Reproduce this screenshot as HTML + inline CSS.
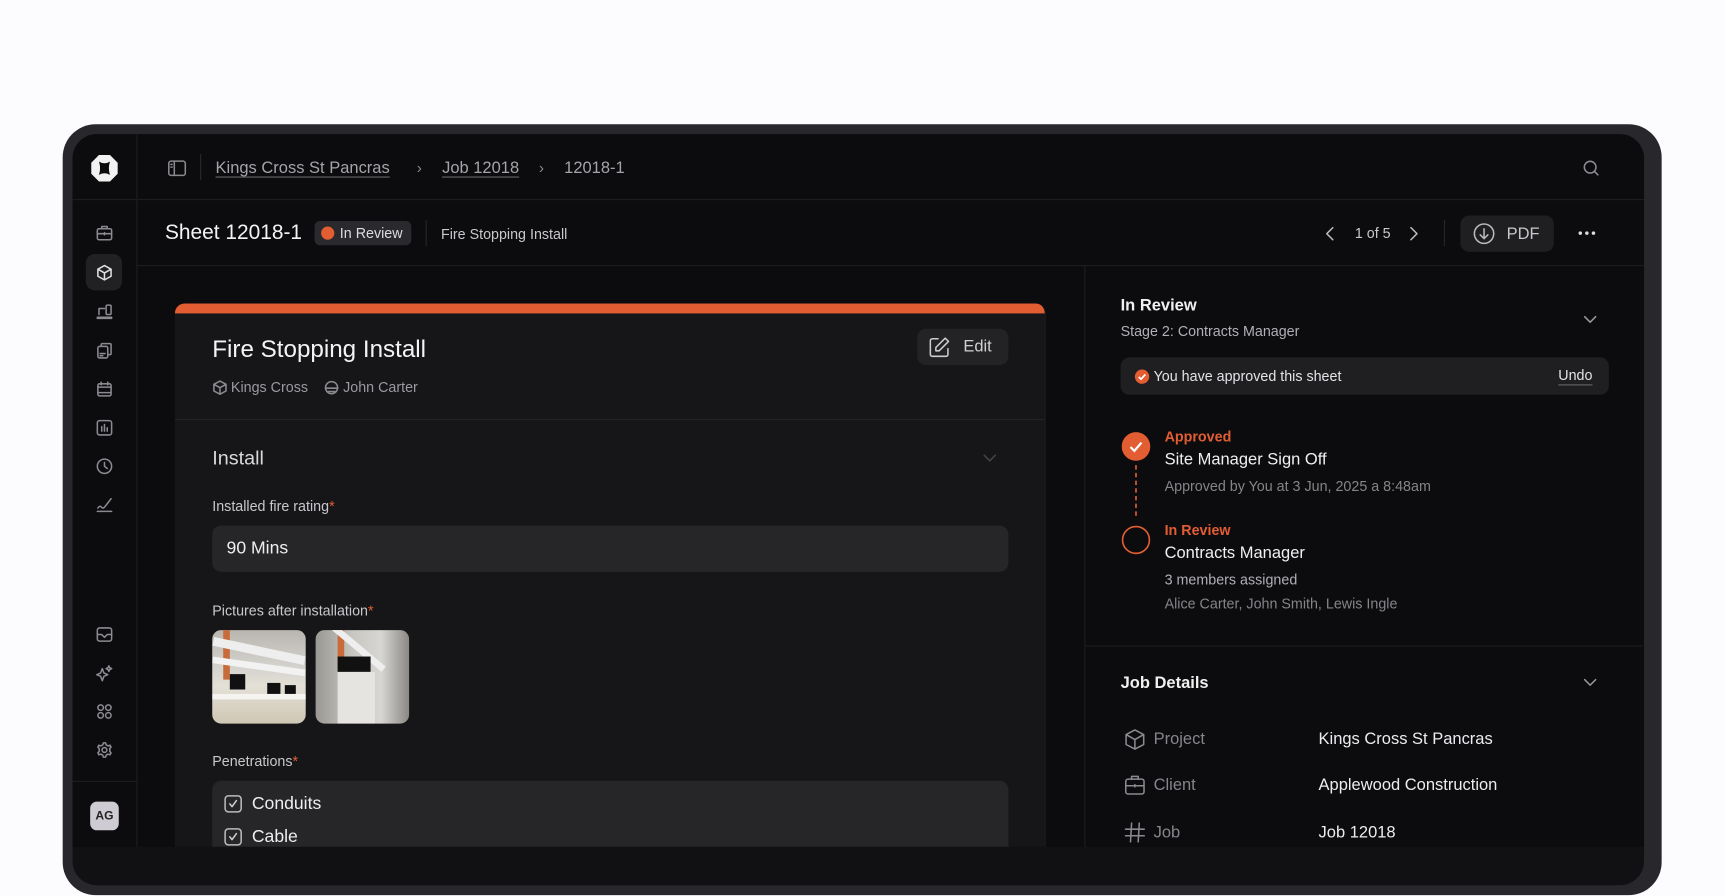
<!DOCTYPE html>
<html><head><meta charset="utf-8"><style>
*{margin:0;padding:0;box-sizing:border-box}
html,body{width:1725px;height:896px;overflow:hidden;background:#fcfcfe;font-family:"Liberation Sans",sans-serif}
#s{position:absolute;left:0;top:0;width:1560px;height:811px;transform:scale(1.0997);transform-origin:0 0}
.a{position:absolute}
.t{position:absolute;white-space:nowrap;transform:translateY(1.5px)}
svg{position:absolute;overflow:visible}
.ic{fill:none;stroke:#8a8a90;stroke-width:1.4;stroke-linecap:round;stroke-linejoin:round}
</style></head><body><div id="s">
<div class="a" style="left:57px;top:113px;width:1454px;height:701px;border-radius:30px;background:#27272c"></div>
<div class="a" style="left:66px;top:122px;width:1429px;height:683px;border-radius:22px;background:#111113;overflow:hidden">
 <div class="a" style="left:0;top:0;width:1429px;height:648px;background:#0c0c0e"></div>
</div>
<div class="a" style="left:124px;top:122px;width:1px;height:648px;background:#1e1e21"></div>
<div class="a" style="left:66px;top:181px;width:1429px;height:1px;background:#1e1e21"></div>
<div class="a" style="left:124px;top:241px;width:1371px;height:1px;background:#1e1e21"></div>
<div class="a" style="left:66px;top:710px;width:58px;height:1px;background:#1e1e21"></div>
<div class="a" style="left:986px;top:241px;width:1px;height:529px;background:#1e1e21"></div>
<svg style="left:83px;top:141px" width="24" height="24" viewBox="0 0 24 24"><path d="M7 0H17L24 7V17L17 24H7L0 17V7Z" fill="#f2f2f2"/><path d="M7 6Q12 9 17 6Q15 12 17 18Q12 15 7 18Q9 12 7 6Z" fill="#0c0c0e"/></svg>
<div class="a" style="left:78px;top:231px;width:33px;height:33px;border-radius:8px;background:#212124"></div>
<svg style="left:88px;top:205px" width="14" height="14" class="ic"><rect x="0.5" y="3" width="13" height="10" rx="1.5"/><path d="M4.5 3V1H9.5V3M0.5 7.5H13.5M7 6.5V8.5"/></svg>
<svg style="left:88px;top:241px" width="14" height="14" class="ic"><path d="M7 0.5L13 3.8V10.2L7 13.5L1 10.2V3.8Z M1 3.8L7 7.2L13 3.8M7 7.2V13.5" stroke="#e0e0e0"/></svg>
<svg style="left:88px;top:277px" width="14" height="14" class="ic"><path d="M2 9V3.5H7M0.5 11.5H13.5V12.5H0.5Z"/><rect x="8.5" y="0.5" width="4.5" height="8.5" rx="1"/></svg>
<svg style="left:88px;top:312px" width="14" height="14" class="ic"><rect x="1" y="3" width="9" height="10.5" rx="1.5"/><path d="M4 3V1.5Q4 0.5 5 0.5H12Q13 0.5 13 1.5V9.5Q13 10.5 12 10.5H10M3 9.5H7.5M3 11.5H5.5"/></svg>
<svg style="left:88px;top:347px" width="14" height="14" class="ic"><rect x="1" y="2" width="12" height="11" rx="1.5"/><path d="M1 5H13M4 0.5V3M10 0.5V3M1 10H13"/></svg>
<svg style="left:88px;top:382px" width="14" height="14" class="ic"><rect x="0.5" y="0.5" width="13" height="13" rx="2"/><path d="M4.5 10V6M7 10V4M9.5 10V7"/></svg>
<svg style="left:88px;top:417px" width="14" height="14" class="ic"><circle cx="7" cy="7" r="6.5"/><path d="M7 3.5V7L9.5 9"/></svg>
<svg style="left:88px;top:452px" width="14" height="14" class="ic"><path d="M0.5 13H13.5M1 10Q3 7 4.5 9.5Q6 11 8 8L13 1.5"/></svg>
<svg style="left:88px;top:570px" width="14" height="14" class="ic"><rect x="0.5" y="1" width="13" height="12" rx="2"/><path d="M0.5 7H4.5L7 9.5L9.5 7H13.5"/></svg>
<svg style="left:88px;top:605px" width="14" height="14" class="ic"><path d="M5 3L6.5 7L10 8.5L6.5 10L5 14L3.5 10L0 8.5L3.5 7Z M11 0.5L11.8 2.2L13.5 3L11.8 3.8L11 5.5L10.2 3.8L8.5 3L10.2 2.2Z"/></svg>
<svg style="left:88px;top:640px" width="14" height="14" class="ic"><circle cx="3.5" cy="3.5" r="2.5"/><circle cx="10.5" cy="3.5" r="2.5"/><circle cx="3.5" cy="10.5" r="2.5"/><circle cx="10.5" cy="10.5" r="2.5"/></svg>
<svg style="left:88px;top:675px" width="14" height="14" class="ic"><circle cx="7" cy="7" r="2.2"/><path d="M6 0.5H8L8.5 2.3L10.3 3.3L12 2.6L13 4.4L11.8 5.7V8.3L13 9.6L12 11.4L10.3 10.7L8.5 11.7L8 13.5H6L5.5 11.7L3.7 10.7L2 11.4L1 9.6L2.2 8.3V5.7L1 4.4L2 2.6L3.7 3.3L5.5 2.3Z"/></svg>
<div class="a" style="left:82px;top:729px;width:26px;height:26px;border-radius:6px;background:#cfcbd3;color:#222;font-size:11px;font-weight:bold;text-align:center;line-height:26px">AG</div>
<svg style="left:153px;top:146px" width="16" height="14" class="ic"><rect x="0.5" y="0.5" width="15" height="13" rx="2"/><path d="M5.5 0.5V13.5M2.5 3.5H3.5M2.5 6H3.5"/></svg>
<div class="a" style="left:182px;top:140px;width:1px;height:24px;background:#2a2a2e"></div>
<div class="t" style="left:196px;top:143px;font-size:15px;color:#a4a4aa;text-decoration:underline;text-underline-offset:3px;text-decoration-color:#666">Kings Cross St Pancras</div>
<div class="t" style="left:379px;top:143px;font-size:14px;color:#888">›</div>
<div class="t" style="left:402px;top:143px;font-size:15px;color:#a4a4aa;text-decoration:underline;text-underline-offset:3px;text-decoration-color:#666">Job 12018</div>
<div class="t" style="left:490px;top:143px;font-size:14px;color:#888">›</div>
<div class="t" style="left:513px;top:143px;font-size:15px;color:#a4a4aa">12018-1</div>
<svg style="left:1440px;top:146px" width="14" height="14" class="ic"><circle cx="6" cy="6" r="5.3"/><path d="M10 10L13 13"/></svg>
<div class="t" style="left:150px;top:200px;font-size:19px;color:#f4f4f4">Sheet 12018-1</div>
<div class="a" style="left:286px;top:201px;width:88px;height:22px;border-radius:5px;background:#2a2a2e"></div>
<div class="a" style="left:292px;top:206px;width:12px;height:12px;border-radius:6px;background:#e35d33"></div>
<div class="t" style="left:309px;top:203px;font-size:13px;color:#ddd">In Review</div>
<div class="a" style="left:387px;top:200px;width:1px;height:24px;background:#26262a"></div>
<div class="t" style="left:401px;top:204px;font-size:13px;color:#c8c8cc">Fire Stopping Install</div>
<svg style="left:1205px;top:206px" width="8" height="13" class="ic"><path d="M7 1L1.5 6.5L7 12" stroke="#bbb"/></svg>
<div class="t" style="left:1232px;top:203px;font-size:13px;color:#c8c8cc">1 of 5</div>
<svg style="left:1282px;top:206px" width="8" height="13" class="ic"><path d="M1 1L6.5 6.5L1 12" stroke="#bbb"/></svg>
<div class="a" style="left:1313px;top:200px;width:1px;height:24px;background:#26262a"></div>
<div class="a" style="left:1328px;top:196px;width:85px;height:33px;border-radius:8px;background:#1f1f22"></div>
<svg style="left:1340px;top:203px" width="19" height="19" class="ic"><circle cx="9.5" cy="9.5" r="8.8" stroke="#bbb"/><path d="M9.5 5V14M6 10.5L9.5 14L13 10.5" stroke="#bbb"/></svg>
<div class="t" style="left:1370px;top:203px;font-size:15px;color:#c8c8cc">PDF</div>
<svg style="left:1435px;top:210px" width="16" height="4"><circle cx="2" cy="2" r="1.6" fill="#ddd"/><circle cx="8" cy="2" r="1.6" fill="#ddd"/><circle cx="14" cy="2" r="1.6" fill="#ddd"/></svg>
<div class="a" style="left:159px;top:276px;width:792px;height:494px;border-radius:9px 9px 0 0;background:#161618;overflow:hidden;border-right:1px solid #1e1e20">
 <div class="a" style="left:0;top:0;width:792px;height:9px;background:#e35d33"></div>
 <div class="a" style="left:0;top:105px;width:792px;height:1px;background:#232326"></div>
</div>
<div class="t" style="left:193px;top:303px;font-size:22px;color:#f4f4f4">Fire Stopping Install</div>
<svg style="left:194px;top:346px" width="12" height="13" class="ic"><path d="M6 0.5L11.5 3.5V9.5L6 12.5L0.5 9.5V3.5Z M0.5 3.5L6 6.5L11.5 3.5M6 6.5V12.5"/></svg>
<div class="t" style="left:210px;top:343px;font-size:13px;color:#9a9aa0">Kings Cross</div>
<svg style="left:295px;top:346px" width="13" height="13" class="ic"><circle cx="6.5" cy="6.5" r="5.5"/><path d="M1 7H12M3.5 10H9.5"/></svg>
<div class="t" style="left:312px;top:343px;font-size:13px;color:#9a9aa0">John Carter</div>
<div class="a" style="left:834px;top:299px;width:83px;height:33px;border-radius:8px;background:#232326"></div>
<svg style="left:845px;top:306px" width="19" height="19" class="ic"><path d="M8 2H3Q1 2 1 4V16Q1 18 3 18H15Q17 18 17 16V11" stroke="#ccc"/><path d="M14.5 1.5L17.5 4.5L9 13H6V10Z" stroke="#ccc"/></svg>
<div class="t" style="left:876px;top:305px;font-size:15px;color:#d0d0d4">Edit</div>
<div class="t" style="left:193px;top:405px;font-size:18px;color:#d8d8dc">Install</div>
<svg style="left:894px;top:413px" width="12" height="7" class="ic"><path d="M1 1L6 6L11 1" stroke="#444"/></svg>
<div class="t" style="left:193px;top:451px;font-size:13px;color:#c8c8cc">Installed fire rating<span style="color:#e35d33">*</span></div>
<div class="a" style="left:193px;top:478px;width:724px;height:42px;border-radius:8px;background:#262628"></div>
<div class="t" style="left:206px;top:489px;font-size:16px;color:#eee">90 Mins</div>
<div class="t" style="left:193px;top:546px;font-size:13px;color:#c8c8cc">Pictures after installation<span style="color:#e35d33">*</span></div>
<div class="a" style="left:193px;top:573px;width:85px;height:85px;border-radius:8px;overflow:hidden;background:linear-gradient(180deg,#b9b6b0 0%,#d8d6d0 45%,#e4e0d6 60%,#cfc7b4 100%)">
 <div class="a" style="left:10px;top:0;width:6px;height:45px;background:#c86a3a"></div>
 <div class="a" style="left:0;top:15px;width:85px;height:8px;background:#eee;transform:rotate(12deg)"></div>
 <div class="a" style="left:0;top:30px;width:85px;height:6px;background:#f2f2f2;transform:rotate(8deg)"></div>
 <div class="a" style="left:16px;top:40px;width:14px;height:14px;background:#111"></div>
 <div class="a" style="left:50px;top:48px;width:12px;height:13px;background:#111"></div>
 <div class="a" style="left:66px;top:50px;width:10px;height:12px;background:#111"></div>
 <div class="a" style="left:0;top:58px;width:85px;height:5px;background:#f6f4f0"></div>
</div>
<div class="a" style="left:287px;top:573px;width:85px;height:85px;border-radius:8px;overflow:hidden;background:linear-gradient(90deg,#9a9894 0%,#c9c7c2 40%,#d8d6d2 70%,#8a8884 100%)">
 <div class="a" style="left:20px;top:0;width:6px;height:35px;background:#c86a3a"></div>
 <div class="a" style="left:0;top:10px;width:70px;height:6px;background:#eee;transform:rotate(40deg)"></div>
 <div class="a" style="left:20px;top:24px;width:30px;height:14px;background:#111"></div>
 <div class="a" style="left:20px;top:38px;width:34px;height:47px;background:#e6e4e0"></div>
</div>
<div class="t" style="left:193px;top:683px;font-size:13px;color:#c8c8cc">Penetrations<span style="color:#e35d33">*</span></div>
<div class="a" style="left:193px;top:710px;width:724px;height:60px;border-radius:8px 8px 0 0;background:#262628"></div>
<svg style="left:204px;top:723px" width="16" height="16" class="ic"><rect x="0.7" y="0.7" width="14.6" height="14.6" rx="3" stroke="#bbb"/><path d="M5 8L7 10.5L11 5" stroke="#ccc"/></svg>
<div class="t" style="left:229px;top:721px;font-size:16px;color:#eee">Conduits</div>
<svg style="left:204px;top:753px" width="16" height="16" class="ic"><rect x="0.7" y="0.7" width="14.6" height="14.6" rx="3" stroke="#bbb"/><path d="M5 8L7 10.5L11 5" stroke="#ccc"/></svg>
<div class="t" style="left:229px;top:751px;font-size:16px;color:#eee">Cable</div>
<div class="t" style="left:1019px;top:268px;font-size:15px;color:#f0f0f0;font-weight:bold">In Review</div>
<div class="t" style="left:1019px;top:292px;font-size:13px;color:#b0b0b6">Stage 2: Contracts Manager</div>
<svg style="left:1440px;top:287px" width="12" height="7" class="ic"><path d="M1 1L6 6L11 1" stroke="#999"/></svg>
<div class="a" style="left:1019px;top:325px;width:444px;height:34px;border-radius:8px;background:#1f1f22"></div>
<svg style="left:1032px;top:336px" width="13" height="13"><circle cx="6.5" cy="6.5" r="6.5" fill="#e35d33"/><path d="M3.5 6.8L5.6 8.8L9.5 4.5" fill="none" stroke="#fff" stroke-width="1.6"/></svg>
<div class="t" style="left:1049px;top:333px;font-size:13px;color:#e4e4e8">You have approved this sheet</div>
<div class="t" style="left:1417px;top:332px;font-size:13px;color:#e4e4e8;text-decoration:underline;text-underline-offset:4px;text-decoration-color:#666">Undo</div>
<svg style="left:1020px;top:393px" width="27" height="80"><circle cx="13" cy="13" r="13" fill="#e35d33"/><path d="M8 13.5L11.5 17L18 9.5" fill="none" stroke="#fff" stroke-width="2"/><path d="M13 30V78" stroke="#e35d33" stroke-width="1.5" stroke-dasharray="4 3"/></svg>
<div class="t" style="left:1059px;top:388px;font-size:13px;color:#e35d33;font-weight:bold">Approved</div>
<div class="t" style="left:1059px;top:408px;font-size:15px;color:#f0f0f0">Site Manager Sign Off</div>
<div class="t" style="left:1059px;top:433px;font-size:13px;color:#858589">Approved by You at 3 Jun, 2025 a 8:48am</div>
<svg style="left:1020px;top:478px" width="27" height="27"><circle cx="13" cy="13" r="12.2" fill="none" stroke="#e35d33" stroke-width="1.5"/></svg>
<div class="t" style="left:1059px;top:473px;font-size:13px;color:#e35d33;font-weight:bold">In Review</div>
<div class="t" style="left:1059px;top:493px;font-size:15px;color:#f0f0f0">Contracts Manager</div>
<div class="t" style="left:1059px;top:518px;font-size:13px;color:#b0b0b6">3 members assigned</div>
<div class="t" style="left:1059px;top:540px;font-size:13px;color:#858589">Alice Carter, John Smith, Lewis Ingle</div>
<div class="a" style="left:986px;top:587px;width:508px;height:1px;background:#1e1e21"></div>
<div class="t" style="left:1019px;top:611px;font-size:15px;color:#f0f0f0;font-weight:bold">Job Details</div>
<svg style="left:1440px;top:617px" width="12" height="7" class="ic"><path d="M1 1L6 6L11 1" stroke="#999"/></svg>
<svg style="left:1023px;top:663px" width="18" height="19" class="ic"><path d="M9 0.8L17 5V14L9 18.2L1 14V5Z M1 5L9 9.5L17 5M9 9.5V18.2"/></svg>
<div class="t" style="left:1049px;top:662px;font-size:15px;color:#85858b">Project</div>
<div class="t" style="left:1199px;top:662px;font-size:15px;color:#ececf0">Kings Cross St Pancras</div>
<svg style="left:1023px;top:705px" width="18" height="18" class="ic"><rect x="0.7" y="3.5" width="16.6" height="13.5" rx="2"/><path d="M6 3.5V1H12V3.5M0.7 9.5H17.3M9 8.5V10.5"/></svg>
<div class="t" style="left:1049px;top:704px;font-size:15px;color:#85858b">Client</div>
<div class="t" style="left:1199px;top:704px;font-size:15px;color:#ececf0">Applewood Construction</div>
<svg style="left:1023px;top:748px" width="18" height="18" class="ic"><path d="M6 0.5L5 17.5M13 0.5L12 17.5M0.5 6H17.5M0.5 12H17.5"/></svg>
<div class="t" style="left:1049px;top:747px;font-size:15px;color:#85858b">Job</div>
<div class="t" style="left:1199px;top:747px;font-size:15px;color:#ececf0">Job 12018</div>
</div></body></html>
